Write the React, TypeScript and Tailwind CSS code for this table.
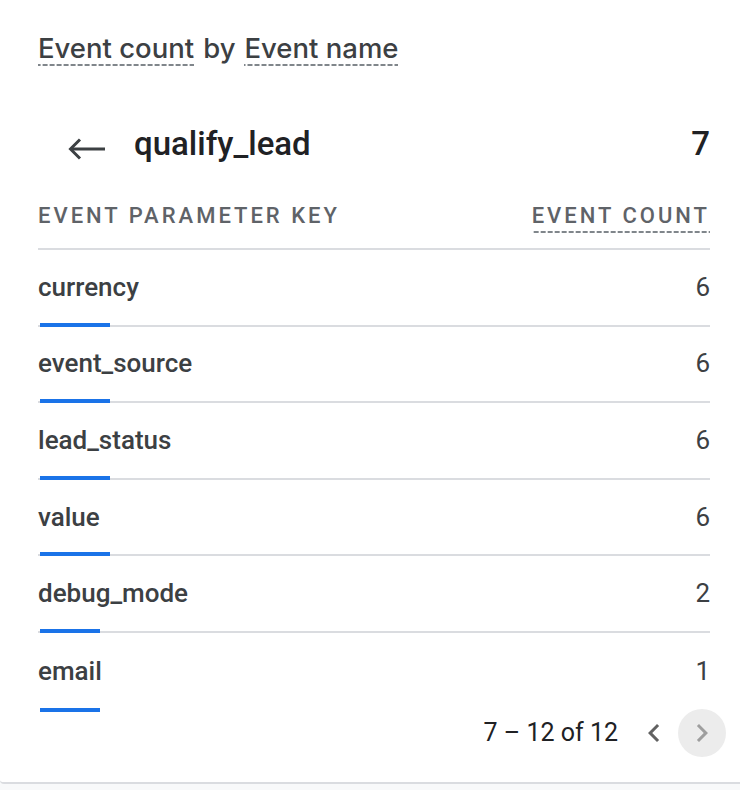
import React from "react";

const rows = [
  { key: "currency", count: 6, bar: 70 },
  { key: "event_source", count: 6, bar: 70 },
  { key: "lead_status", count: 6, bar: 70 },
  { key: "value", count: 6, bar: 70 },
  { key: "debug_mode", count: 2, bar: 60 },
  { key: "email", count: 1, bar: 60 },
];

const dashed =
  "bg-[linear-gradient(to_right,#80868b_65%,transparent_0)] bg-[length:7px_2px] bg-repeat-x bg-bottom";

export default function App() {
  return (
    <div className="w-[740px] h-[790px] bg-[#f8f9fa] font-['Roboto',sans-serif]">
      <div className="h-[784px] bg-white border-b-2 border-[#dadce0] rounded-bl-[4px] flex flex-col">
        {/* Title */}
        <div className="pl-[38px] pt-[31px] h-[100px]">
          <div className="font-['Inter',sans-serif] font-medium text-[27.5px] leading-[34px] text-[#3c4043] flex gap-[9px]">
            <span className={`pb-[1px] ${dashed}`}>Event count</span>
            <span className="pb-[1px]">by</span>
            <span className={`pb-[1px] ${dashed}`}>Event name</span>
          </div>
        </div>

        {/* Header row */}
        <div className="h-[86px] pl-[38px] pr-[30px] flex items-center">
          <div className="w-[96px] flex items-center pl-[30px]">
            <svg width="38" height="24" viewBox="0 0 38 24" className="mt-[12px]">
              <path d="M3 12 H37" stroke="#3c4043" strokeWidth="3" fill="none" />
              <path d="M12 2.5 L2.5 12 L12 21.5" stroke="#3c4043" strokeWidth="3" fill="none" strokeLinejoin="miter" />
            </svg>
          </div>
          <div className="flex-1 text-[33px] font-medium text-[#202124] leading-none">qualify_lead</div>
          <div className="text-[33px] font-medium text-[#202124] leading-none">7</div>
        </div>

        {/* Column headers */}
        <div className="h-[64px] mx-[38px] mr-[30px] flex items-start justify-between border-b-2 border-[#dadce0] text-[22px] font-medium tracking-[3px] text-[#5f6368]">
          <span className="leading-[26px] pt-[17px]">EVENT PARAMETER KEY</span>
          <span className={`leading-[26px] pt-[17px] pb-[4px] ${dashed}`}>EVENT COUNT</span>
        </div>

        {/* Rows */}
        <div className="mx-[38px] mr-[30px] flex flex-col">
          {rows.map((r, i) => (
            <div
              key={r.key}
              className={`relative h-[76.6px] flex items-center justify-between text-[26px] text-[#3c4043] ${
                i < rows.length - 1 ? "border-b-2 border-[#dadce0]" : ""
              }`}
            >
              <span className="font-medium">{r.key}</span>
              <span>{r.count}</span>
              <div
                className="absolute left-[2px] bottom-[-2px] h-[4px] bg-[#1a73e8]"
                style={{ width: r.bar }}
              />
            </div>
          ))}
        </div>

        {/* Pagination */}
        <div className="flex items-center justify-end pr-[14px] mt-[-1px] h-[48px]">
          <span className="text-[25px] text-[#202124] mr-[12px]">7 – 12 of 12</span>
          <div className="w-[48px] h-[48px] flex items-center justify-center">
            <svg width="36" height="36" viewBox="0 0 24 24">
              <path d="M15.41 7.41 14 6l-6 6 6 6 1.41-1.41L10.83 12z" fill="#616161" />
            </svg>
          </div>
          <div className="w-[48px] h-[48px] rounded-full bg-[#ececec] flex items-center justify-center">
            <svg width="36" height="36" viewBox="0 0 24 24">
              <path d="M8.59 16.59 10 18l6-6-6-6-1.41 1.41L13.17 12z" fill="#9e9e9e" />
            </svg>
          </div>
        </div>
      </div>
    </div>
  );
}
